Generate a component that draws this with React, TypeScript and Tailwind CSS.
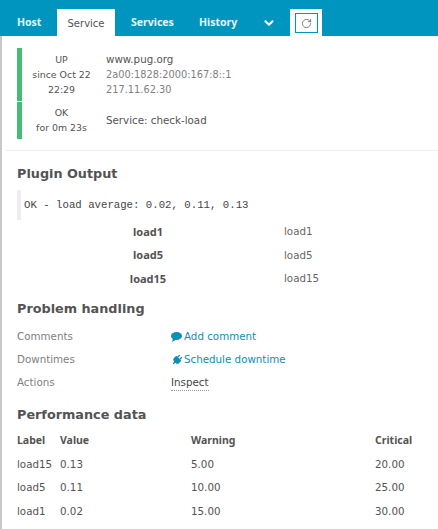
import { ChevronDown, RotateCw, Plug } from "lucide-react";

const font = "font-['DejaVu_Sans',sans-serif]";
const bold = "font-['Noto_Sans',sans-serif] text-[10.5px] font-bold";

function Tab({ label, className }: { label: string; className: string }) {
  return <div className={`flex h-[27px] items-center pt-[1px] text-white/90 ${bold} ${className}`}>{label}</div>;
}

function H2({ children, className }: { children: string; className: string }) {
  return <h2 className={`text-[12.8px] leading-[18px] font-bold text-[#535353] ${className}`}>{children}</h2>;
}

const plugin = ["load1", "load5", "load15"];
const perf = [
  ["load15", "0.13", "5.00", "20.00"],
  ["load5", "0.11", "10.00", "25.00"],
  ["load1", "0.02", "15.00", "30.00"],
];

export default function App() {
  return (
    <div className={`h-[529px] w-[438px] overflow-hidden bg-white text-[10.3px] text-[#535353] ${font}`}>
      <nav className="flex h-9 items-end bg-[#0095bf]">
        <Tab label="Host" className="w-[57px] pl-[17px]" />
        <div className="flex h-[27px] w-[58px] items-center justify-center bg-white pt-[1px] text-[10px] text-[#535353]">
          Service
        </div>
        <Tab label="Services" className="w-[68px] pl-[16px]" />
        <Tab label="History" className="w-[70px] pl-[16px]" />
        <div className="flex h-[27px] w-[32px] items-center justify-center text-white">
          <ChevronDown size={14} strokeWidth={3.5} />
        </div>
        <div className="ml-[5px] flex h-[27px] w-[32px] items-start justify-center bg-white pt-1">
          <div className="flex h-[20px] w-[23px] items-center justify-center border border-[#0095bf] text-[#666]">
            <RotateCw size={11} strokeWidth={1.75} />
          </div>
        </div>
      </nav>

      <div className="h-[493px] border-l-2 border-[#c8c8c8] pl-[4px]">
        <div className="border-b border-[#eeeeee] pt-3 pb-[11px] pl-[11px]">
          <div className="flex h-[53px] border-l-[5px] border-[#44bb77]">
            <div className="flex w-[79px] flex-col items-center pt-1 text-center text-[9.4px] leading-[15px]">
              <span>UP</span>
              <span>since Oct 22</span>
              <span>22:29</span>
            </div>
            <div className="ml-[5px] pt-1 leading-[15px]">
              <div>www.pug.org</div>
              <div className="text-[9.8px] text-[#808080]">2a00:1828:2000:167:8::1</div>
              <div className="text-[9.8px] text-[#808080]">217.11.62.30</div>
            </div>
          </div>
          <div className="mt-[1px] flex h-[37px] border-l-[5px] border-[#44bb77]">
            <div className="flex w-[79px] flex-col items-center pt-[3px] text-center text-[9.4px] leading-[15px]">
              <span>OK</span>
              <span>for 0m 23s</span>
            </div>
            <div className="ml-[5px] flex items-center pt-[1px]">Service: check-load</div>
          </div>
        </div>

        <div className="pl-[11px]">
          <H2 className="mt-[14px]">Plugin Output</H2>
          <div className="mt-[7px] flex h-[30px] items-center border-l-[4px] border-[#eeeeee] pt-[1px] pl-[3px] font-['Liberation_Mono',monospace] text-[10.7px] text-[#444]">
            OK - load average: 0.02, 0.11, 0.13
          </div>
          <div>
            {plugin.map((p) => (
              <div key={p} className="flex h-[23.5px] items-center">
                <div className="w-[262px] text-center font-['Noto_Sans',sans-serif] text-[11px] font-bold text-[#535353]">
                  {p}
                </div>
                <div className="ml-[5px] text-[#666]">{p}</div>
              </div>
            ))}
          </div>

          <H2 className="mt-[9px]">Problem handling</H2>
          <div className="mt-[8px]">
            <div className="flex h-[23px] items-center">
              <div className="w-[154px] text-[#808080]">Comments</div>
              <div className="flex items-center gap-[2px] text-[#0b8fb5]">
                <svg width="11" height="10" viewBox="0 0 11 10" fill="currentColor">
                  <ellipse cx="5.5" cy="4" rx="5.5" ry="4" />
                  <path d="M2 6.5 L1 10 L5.5 7.5 Z" />
                </svg>
                Add comment
              </div>
            </div>
            <div className="flex h-[23px] items-center">
              <div className="w-[154px] text-[#808080]">Downtimes</div>
              <div className="flex items-center gap-[1px] text-[#0b8fb5]">
                <Plug size={12} fill="currentColor" strokeWidth={2.5} className="rotate-45" />
                Schedule downtime
              </div>
            </div>
            <div className="flex h-[23px] items-center">
              <div className="w-[154px] text-[#808080]">Actions</div>
              <div className="border-b border-dotted border-[#999] leading-[15px] text-[#444]">Inspect</div>
            </div>
          </div>

          <H2 className="mt-[11px]">Performance data</H2>
          <table className="mt-[6px] w-[410px] table-fixed border-collapse">
            <thead>
              <tr className={`h-[23px] text-left ${bold}`}>
                <th className="w-[43px] font-bold">Label</th>
                <th className="w-[131px] font-bold">Value</th>
                <th className="w-[184px] font-bold">Warning</th>
                <th className="font-bold">Critical</th>
              </tr>
            </thead>
            <tbody>
              {perf.map((r) => (
                <tr key={r[0]} className="h-[23.5px]">
                  {r.map((c, i) => (
                    <td key={i}>{c}</td>
                  ))}
                </tr>
              ))}
            </tbody>
          </table>
        </div>
      </div>
    </div>
  );
}
